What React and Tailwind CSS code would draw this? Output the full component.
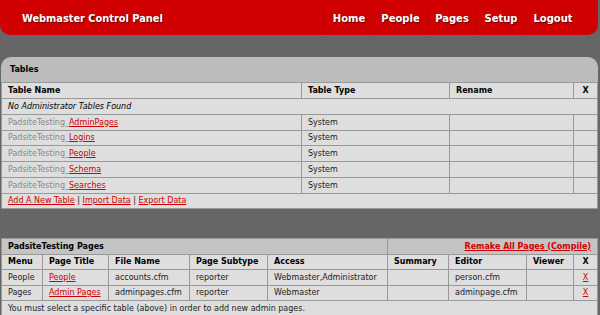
export default function App() {
  const td = "border border-[#999] px-[6px] py-0 align-middle";
  const tables = ["AdminPages", "Logins", "People", "Schema", "Searches"];
  const heights = ["h-[16px]", "h-[15px]", "h-[16px]", "h-[16px]", "h-[16px]"];
  const nav = [
    ["Home", "w-[49px]"],
    ["People", "w-[54px]"],
    ["Pages", "w-[49px]"],
    ["Setup", "w-[49px]"],
    ["Logout", "w-[55px]"],
  ];
  return (
    <div className="w-[600px] h-[315px] bg-[#666666] overflow-hidden text-[8px] leading-none text-[#222]" style={{ fontFamily: '"DejaVu Sans", Verdana, sans-serif' }}>
      <div className="h-[35px] mr-[2px] bg-[#d10000] rounded-b-[10px] flex items-center justify-between [text-shadow:1px_1px_1px_rgba(0,0,0,0.55)] text-white font-bold text-[10px]">
        <div className="pl-[22px] pt-[2px] text-[9.8px]">Webmaster Control Panel</div>
        <div className="flex h-full items-stretch pt-[6px] pr-[18px]">
          {nav.map(([n, w]) => (
            <div key={n} className={"border-l border-[#c40000] flex items-center justify-center pb-[4px] " + w}>{n}</div>
          ))}
        </div>
      </div>
      <div className="h-[22px]" />
      <div className="ml-[1px] mr-[2px] bg-[#bcbcbc] rounded-t-[10px]">
        <div className="h-[25px] flex items-center pl-[9px] font-bold text-black">Tables</div>
        <table className="w-full table-fixed border-collapse bg-[#dedede]">
          <colgroup>
            <col className="w-[300px]" />
            <col className="w-[148px]" />
            <col className="w-[124px]" />
            <col />
          </colgroup>
          <tbody>
            <tr className="h-[16px] font-bold text-black">
              <td className={td}>Table Name</td>
              <td className={td}>Table Type</td>
              <td className={td}>Rename</td>
              <td className={td + " text-center"}>X</td>
            </tr>
            <tr className="h-[16px]">
              <td className={td + " italic text-black"} colSpan={4}>No Administrator Tables Found</td>
            </tr>
            {tables.map((t, i) => (
              <tr key={t} className={heights[i]}>
                <td className={td}>
                  <span className="text-[#888]">PadsiteTesting_</span>
                  <span className="text-[#d10000] underline">{t}</span>
                </td>
                <td className={td}>System</td>
                <td className={td}></td>
                <td className={td}></td>
              </tr>
            ))}
            <tr className="h-[15px]">
              <td className={td} colSpan={4}>
                <span className="text-[#d10000] underline">Add A New Table</span>
                <span> | </span>
                <span className="text-[#d10000] underline">Import Data</span>
                <span> | </span>
                <span className="text-[#d10000] underline">Export Data</span>
              </td>
            </tr>
          </tbody>
        </table>
      </div>
      <div className="h-[29px]" />
      <div className="ml-[1px] mr-[2px]">
        <table className="w-full table-fixed border-collapse bg-[#dedede]">
          <colgroup>
            <col className="w-[41px]" />
            <col className="w-[66px]" />
            <col className="w-[81px]" />
            <col className="w-[78px]" />
            <col className="w-[120px]" />
            <col className="w-[61px]" />
            <col className="w-[78px]" />
            <col className="w-[47px]" />
            <col />
          </colgroup>
          <tbody>
            <tr className="h-[16px] font-bold text-black bg-[#c4c4c4]">
              <td className={td} colSpan={5}>PadsiteTesting Pages</td>
              <td className={td + " text-right"} colSpan={4}>
                <span className="text-[#d10000] underline">Remake All Pages (Compile)</span>
              </td>
            </tr>
            <tr className="h-[15px] font-bold text-black">
              <td className={td}>Menu</td>
              <td className={td}>Page Title</td>
              <td className={td}>File Name</td>
              <td className={td}>Page Subtype</td>
              <td className={td}>Access</td>
              <td className={td}>Summary</td>
              <td className={td}>Editor</td>
              <td className={td}>Viewer</td>
              <td className={td + " text-center"}>X</td>
            </tr>
            <tr className="h-[16px]">
              <td className={td}>People</td>
              <td className={td}><span className="text-[#d10000] underline">People</span></td>
              <td className={td}>accounts.cfm</td>
              <td className={td}>reporter</td>
              <td className={td}>Webmaster,Administrator</td>
              <td className={td}></td>
              <td className={td}>person.cfm</td>
              <td className={td}></td>
              <td className={td + " text-center"}><span className="text-[#d10000] underline">X</span></td>
            </tr>
            <tr className="h-[15px]">
              <td className={td}>Pages</td>
              <td className={td}><span className="text-[#d10000] underline">Admin Pages</span></td>
              <td className={td}>adminpages.cfm</td>
              <td className={td}>reporter</td>
              <td className={td}>Webmaster</td>
              <td className={td}></td>
              <td className={td}>adminpage.cfm</td>
              <td className={td}></td>
              <td className={td + " text-center"}><span className="text-[#d10000] underline">X</span></td>
            </tr>
            <tr className="h-[16px]">
              <td className={td} colSpan={9}>You must select a specific table (above) in order to add new admin pages.</td>
            </tr>
          </tbody>
        </table>
      </div>
    </div>
  );
}
